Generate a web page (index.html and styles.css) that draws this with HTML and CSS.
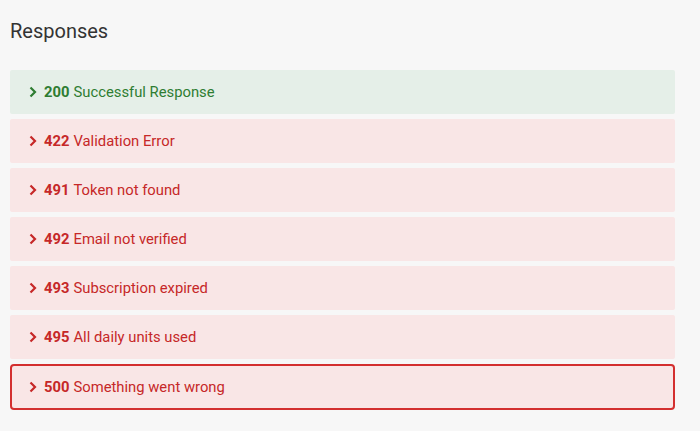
FILE: index.html
```html
<!DOCTYPE html>
<html lang="en">
<head>
<meta charset="UTF-8" />
<title>Responses</title>
<link rel="stylesheet" href="styles.css">
</head>
<body>
<main>
  <h2>Responses</h2>
  <div class="responses">
    <div class="response ok"><svg class="chev" viewBox="0 0 8 12"><polyline points="1.5,1.5 6,6 1.5,10.5"/></svg><b>200</b> Successful Response</div>
    <div class="response err"><svg class="chev" viewBox="0 0 8 12"><polyline points="1.5,1.5 6,6 1.5,10.5"/></svg><b>422</b> Validation Error</div>
    <div class="response err"><svg class="chev" viewBox="0 0 8 12"><polyline points="1.5,1.5 6,6 1.5,10.5"/></svg><b>491</b> Token not found</div>
    <div class="response err"><svg class="chev" viewBox="0 0 8 12"><polyline points="1.5,1.5 6,6 1.5,10.5"/></svg><b>492</b> Email not verified</div>
    <div class="response err"><svg class="chev" viewBox="0 0 8 12"><polyline points="1.5,1.5 6,6 1.5,10.5"/></svg><b>493</b> Subscription expired</div>
    <div class="response err"><svg class="chev" viewBox="0 0 8 12"><polyline points="1.5,1.5 6,6 1.5,10.5"/></svg><b>495</b> All daily units used</div>
    <div class="response err focus"><svg class="chev" viewBox="0 0 8 12"><polyline points="1.5,1.5 6,6 1.5,10.5"/></svg><b>500</b> Something went wrong</div>
  </div>
</main>
</body>
</html>
```

FILE: styles.css
```css
body {
  margin: 0; font-family: Roboto, "Liberation Sans", sans-serif; background: #f7f7f7; color: #333;
}
main {
  padding: 18px 25px 0 10px;
}
h2 {
  font-weight: 400; font-size: 20px; margin: 0 0 26px; color: #333; line-height: 26px;
}
.responses {
  display: flex;
  flex-direction: column;
  gap: 5px;
}
.response {
  height: 44px;
  display: flex;
  align-items: center;
  padding-left: 19px;
  font-size: 14.8px;
  border-radius: 2px;
  box-sizing: border-box;
}
.response b {
  font-weight: 700;
  margin-right: 4px;
}
.chev {
  width: 8px;
  height: 12px;
  margin-right: 7px;
  fill: none;
  stroke: currentColor;
  stroke-width: 2.2;
}
.ok {
  background: #e5efe8;
  color: #2e7d32;
}
.err {
  background: #f9e6e6;
  color: #c62828;
}
.focus {
  border: 2px solid #d32f2f;
  border-radius: 4px;
  padding-left: 17px;
  height: 46px;
}
```
